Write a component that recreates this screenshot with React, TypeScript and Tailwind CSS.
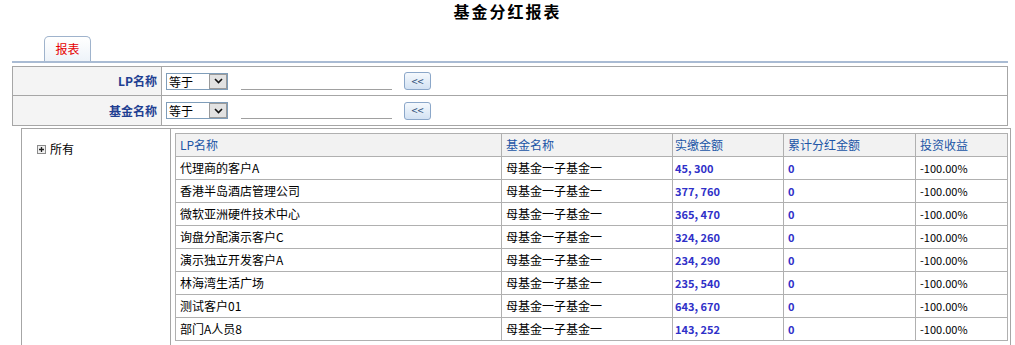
import React from "react";

const rows = [
  { lp: "代理商的客户A", fund: "母基金一子基金一", paid: "45, 300" },
  { lp: "香港半岛酒店管理公司", fund: "母基金一子基金一", paid: "377, 760" },
  { lp: "微软亚洲硬件技术中心", fund: "母基金一子基金一", paid: "365, 470" },
  { lp: "询盘分配演示客户C", fund: "母基金一子基金一", paid: "324, 260" },
  { lp: "演示独立开发客户A", fund: "母基金一子基金一", paid: "234, 290" },
  { lp: "林海湾生活广场", fund: "母基金一子基金一", paid: "235, 540" },
  { lp: "测试客户01", fund: "母基金一子基金一", paid: "643, 670" },
  { lp: "部门A人员8", fund: "母基金一子基金一", paid: "143, 252" },
];

function FilterRow({ label, last }: { label: string; last?: boolean }) {
  return (
    <div className={`flex h-[29px] ${last ? "" : "border-b border-[#a6a6a6]"}`}>
      <div className="w-[149px] shrink-0 bg-[#f4f4f4] border-r border-[#a6a6a6] flex items-center justify-end pr-[4px] text-[12px] font-bold text-[#1f3f92]">
        {label}
      </div>
      <div className="flex items-center pl-[4px]">
        {/* select */}
        <div className="w-[62px] h-[17px] border border-[#7f9db9] bg-white flex items-center">
          <span className="flex-1 pl-[2px] text-[12px] leading-[15px] text-black">等于</span>
          <span className="w-[18px] h-[15px] bg-[#e2e2e2] border border-[#9a9a9a] flex items-center justify-center">
            <svg width="9" height="6" viewBox="0 0 9 6">
              <path d="M1 1 L4.5 4.5 L8 1" fill="none" stroke="#111" strokeWidth="1.6" />
            </svg>
          </span>
        </div>
        {/* text input */}
        <div className="ml-[13px] w-[151px] h-[16px] border-b border-[#a0a0a0] mt-[1px]" />
        {/* button */}
        <div className="ml-[12px] w-[27px] h-[18px] rounded-[3px] border border-[#8ba7c9] bg-gradient-to-b from-[#f5f9fd] to-[#d3e2f3] flex items-center justify-center text-[11px] leading-none text-[#34527a]">
          &lt;&lt;
        </div>
      </div>
    </div>
  );
}

export default function App() {
  const th = "border border-[#b0b0b0] bg-[#f2f2f2] text-left font-normal text-[#2155a6] h-[23px] pl-[4px]";
  const td = "border border-[#b0b0b0] h-[23px] pl-[4px]";
  return (
    <div
      className="w-[1015px] h-[345px] overflow-hidden bg-white text-[12px] text-black"
      style={{ fontFamily: '"Noto Sans CJK SC", "Liberation Sans", sans-serif' }}
    >
      {/* title */}
      <div className="h-[36px] flex justify-center pt-0">
        <span className="text-[16px] font-bold leading-[22px] tracking-[2px]">基金分红报表</span>
      </div>

      {/* tab strip */}
      <div className="mx-[12px] w-[996px] border-b-2 border-[#a9bbd3] flex">
        <div className="ml-[32px] w-[47px] h-[25px] rounded-t-[5px] border border-b-0 border-[#9fb3cc] bg-gradient-to-b from-white to-[#eef3f9] flex items-center justify-center text-[12px] text-[#e60000]">
          报表
        </div>
      </div>

      {/* filters */}
      <div className="mt-[3px] ml-[12px] w-[996px] border border-[#a6a6a6]">
        <FilterRow label="LP名称" />
        <FilterRow label="基金名称" last />
      </div>

      {/* lower area */}
      <div className="mt-[2px] ml-[21px] w-[990px] h-[300px] border border-b-0 border-[#a6a6a6] flex">
        <div className="w-[149px] shrink-0 border-r border-[#a6a6a6] pl-[15px] pt-[13px]">
          <div className="flex items-center gap-[4px] leading-[14px]">
            <span className="w-[9px] h-[9px] border border-[#8a8a8a] bg-[#f0f0f0] flex items-center justify-center">
              <svg width="7" height="7" viewBox="0 0 7 7">
                <path d="M1 3.5 H6 M3.5 1 V6" stroke="#222" strokeWidth="1.3" />
              </svg>
            </span>
            <span className="text-[12px]">所有</span>
          </div>
        </div>
        <div className="ml-[4px] mt-[4px]">
          <table className="table-fixed border-collapse w-[832px]">
            <colgroup>
              <col className="w-[326px]" />
              <col className="w-[171px]" />
              <col className="w-[111px]" />
              <col className="w-[132px]" />
              <col className="w-[92px]" />
            </colgroup>
            <thead>
              <tr>
                <th className={th}>LP名称</th>
                <th className={th}>基金名称</th>
                <th className={`${th} !pl-[2px]`}>实缴金额</th>
                <th className={th}>累计分红金额</th>
                <th className={th}>投资收益</th>
              </tr>
            </thead>
            <tbody>
              {rows.map((r) => (
                <tr key={r.lp}>
                  <td className={td}>{r.lp}</td>
                  <td className={td}>{r.fund}</td>
                  <td className={`${td} !pl-[2px] text-[11px] font-bold text-[#3030c8]`}>{r.paid}</td>
                  <td className={`${td} text-[11px] font-bold text-[#3030c8]`}>0</td>
                  <td className={`${td} text-[11px]`}>-100.00%</td>
                </tr>
              ))}
            </tbody>
          </table>
        </div>
      </div>
    </div>
  );
}
